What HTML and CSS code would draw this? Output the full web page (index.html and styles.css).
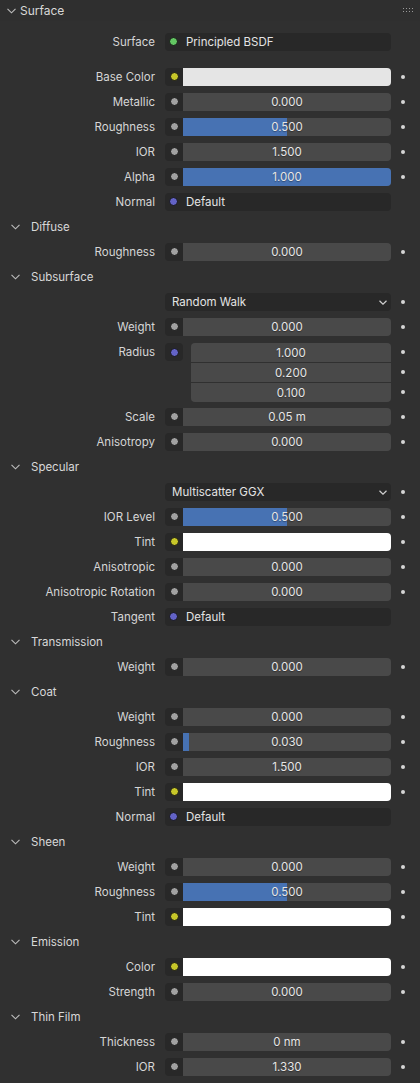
FILE: index.html
```html
<!DOCTYPE html>
<html>
<head>
<meta charset="utf-8">
<link rel="stylesheet" href="styles.css">
</head>
<body>
<div class="panel">
  <div class="top-head">
    <svg class="chev" width="9" height="6" viewBox="0 0 9 6"><polyline points="0.5,0.8 4.5,4.8 8.5,0.8" fill="none" stroke="#bdbdbd" stroke-width="1.1"/></svg>
    <span class="top-title">Surface</span>
    <span class="grip"><i></i><i></i><i></i><i></i><i></i><i></i><i></i><i></i></span>
  </div>

  <div class="row surf-row">
    <span class="label">Surface</span>
    <div class="field link"><i class="dot green"></i><span class="ltext">Principled BSDF</span></div>
    <span></span>
  </div>

  <div class="row"><span class="label">Base Color</span><div class="field"><span class="sock"><i class="dot yellow"></i></span><div class="color light"></div></div><span class="kf"></span></div>
  <div class="row"><span class="label">Metallic</span><div class="field"><span class="sock"><i class="dot grey"></i></span><div class="num"><span class="val">0.000</span></div></div><span class="kf"></span></div>
  <div class="row"><span class="label">Roughness</span><div class="field"><span class="sock"><i class="dot grey"></i></span><div class="num"><span class="fill" style="width:50%"></span><span class="val">0.500</span></div></div><span class="kf"></span></div>
  <div class="row"><span class="label">IOR</span><div class="field"><span class="sock"><i class="dot grey"></i></span><div class="num"><span class="val">1.500</span></div></div><span class="kf"></span></div>
  <div class="row"><span class="label">Alpha</span><div class="field"><span class="sock"><i class="dot grey"></i></span><div class="num"><span class="fill" style="width:100%"></span><span class="val">1.000</span></div></div><span class="kf"></span></div>
  <div class="row"><span class="label">Normal</span><div class="field link"><i class="dot blue"></i><span class="ltext">Default</span></div><span></span></div>

  <div class="sub-head"><svg class="chev" width="9" height="6" viewBox="0 0 9 6"><polyline points="0.5,0.8 4.5,4.8 8.5,0.8" fill="none" stroke="#bdbdbd" stroke-width="1.1"/></svg><span>Diffuse</span></div>
  <div class="row"><span class="label">Roughness</span><div class="field"><span class="sock"><i class="dot grey"></i></span><div class="num"><span class="val">0.000</span></div></div><span class="kf"></span></div>

  <div class="sub-head"><svg class="chev" width="9" height="6" viewBox="0 0 9 6"><polyline points="0.5,0.8 4.5,4.8 8.5,0.8" fill="none" stroke="#bdbdbd" stroke-width="1.1"/></svg><span>Subsurface</span></div>
  <div class="row"><span class="label"></span><div class="field menu"><span class="mtext">Random Walk</span><svg class="mchev" width="8" height="5" viewBox="0 0 8 5"><polyline points="0.5,0.8 4,4.2 7.5,0.8" fill="none" stroke="#d0d0d0" stroke-width="1.2"/></svg></div><span class="kf"></span></div>
  <div class="row"><span class="label">Weight</span><div class="field"><span class="sock"><i class="dot grey"></i></span><div class="num"><span class="val">0.000</span></div></div><span class="kf"></span></div>
  <div class="row vec-row">
    <span class="label vlabel">Radius</span>
    <div class="vec">
      <span class="sock vsock"><i class="dot blue"></i></span>
      <div class="vfields">
        <div class="vnum first"><span class="val">1.000</span></div>
        <div class="vnum"><span class="val">0.200</span></div>
        <div class="vnum last"><span class="val">0.100</span></div>
      </div>
    </div>
    <div class="vkfs"><span class="kf"></span><span class="kf"></span><span class="kf"></span></div>
  </div>
  <div class="row"><span class="label">Scale</span><div class="field"><span class="sock"><i class="dot grey"></i></span><div class="num"><span class="val">0.05 m</span></div></div><span class="kf"></span></div>
  <div class="row"><span class="label">Anisotropy</span><div class="field"><span class="sock"><i class="dot grey"></i></span><div class="num"><span class="val">0.000</span></div></div><span class="kf"></span></div>

  <div class="sub-head"><svg class="chev" width="9" height="6" viewBox="0 0 9 6"><polyline points="0.5,0.8 4.5,4.8 8.5,0.8" fill="none" stroke="#bdbdbd" stroke-width="1.1"/></svg><span>Specular</span></div>
  <div class="row"><span class="label"></span><div class="field menu"><span class="mtext">Multiscatter GGX</span><svg class="mchev" width="8" height="5" viewBox="0 0 8 5"><polyline points="0.5,0.8 4,4.2 7.5,0.8" fill="none" stroke="#d0d0d0" stroke-width="1.2"/></svg></div><span class="kf"></span></div>
  <div class="row"><span class="label">IOR Level</span><div class="field"><span class="sock"><i class="dot grey"></i></span><div class="num"><span class="fill" style="width:50%"></span><span class="val">0.500</span></div></div><span class="kf"></span></div>
  <div class="row"><span class="label">Tint</span><div class="field"><span class="sock"><i class="dot yellow"></i></span><div class="color white"></div></div><span class="kf"></span></div>
  <div class="row"><span class="label">Anisotropic</span><div class="field"><span class="sock"><i class="dot grey"></i></span><div class="num"><span class="val">0.000</span></div></div><span class="kf"></span></div>
  <div class="row"><span class="label">Anisotropic Rotation</span><div class="field"><span class="sock"><i class="dot grey"></i></span><div class="num"><span class="val">0.000</span></div></div><span class="kf"></span></div>
  <div class="row"><span class="label">Tangent</span><div class="field link"><i class="dot blue"></i><span class="ltext">Default</span></div><span></span></div>

  <div class="sub-head"><svg class="chev" width="9" height="6" viewBox="0 0 9 6"><polyline points="0.5,0.8 4.5,4.8 8.5,0.8" fill="none" stroke="#bdbdbd" stroke-width="1.1"/></svg><span>Transmission</span></div>
  <div class="row"><span class="label">Weight</span><div class="field"><span class="sock"><i class="dot grey"></i></span><div class="num"><span class="val">0.000</span></div></div><span class="kf"></span></div>

  <div class="sub-head"><svg class="chev" width="9" height="6" viewBox="0 0 9 6"><polyline points="0.5,0.8 4.5,4.8 8.5,0.8" fill="none" stroke="#bdbdbd" stroke-width="1.1"/></svg><span>Coat</span></div>
  <div class="row"><span class="label">Weight</span><div class="field"><span class="sock"><i class="dot grey"></i></span><div class="num"><span class="val">0.000</span></div></div><span class="kf"></span></div>
  <div class="row"><span class="label">Roughness</span><div class="field"><span class="sock"><i class="dot grey"></i></span><div class="num"><span class="fill" style="width:3%"></span><span class="val">0.030</span></div></div><span class="kf"></span></div>
  <div class="row"><span class="label">IOR</span><div class="field"><span class="sock"><i class="dot grey"></i></span><div class="num"><span class="val">1.500</span></div></div><span class="kf"></span></div>
  <div class="row"><span class="label">Tint</span><div class="field"><span class="sock"><i class="dot yellow"></i></span><div class="color white"></div></div><span class="kf"></span></div>
  <div class="row"><span class="label">Normal</span><div class="field link"><i class="dot blue"></i><span class="ltext">Default</span></div><span></span></div>

  <div class="sub-head"><svg class="chev" width="9" height="6" viewBox="0 0 9 6"><polyline points="0.5,0.8 4.5,4.8 8.5,0.8" fill="none" stroke="#bdbdbd" stroke-width="1.1"/></svg><span>Sheen</span></div>
  <div class="row"><span class="label">Weight</span><div class="field"><span class="sock"><i class="dot grey"></i></span><div class="num"><span class="val">0.000</span></div></div><span class="kf"></span></div>
  <div class="row"><span class="label">Roughness</span><div class="field"><span class="sock"><i class="dot grey"></i></span><div class="num"><span class="fill" style="width:50%"></span><span class="val">0.500</span></div></div><span class="kf"></span></div>
  <div class="row"><span class="label">Tint</span><div class="field"><span class="sock"><i class="dot yellow"></i></span><div class="color white"></div></div><span class="kf"></span></div>

  <div class="sub-head"><svg class="chev" width="9" height="6" viewBox="0 0 9 6"><polyline points="0.5,0.8 4.5,4.8 8.5,0.8" fill="none" stroke="#bdbdbd" stroke-width="1.1"/></svg><span>Emission</span></div>
  <div class="row"><span class="label">Color</span><div class="field"><span class="sock"><i class="dot yellow"></i></span><div class="color white"></div></div><span class="kf"></span></div>
  <div class="row"><span class="label">Strength</span><div class="field"><span class="sock"><i class="dot grey"></i></span><div class="num"><span class="val">0.000</span></div></div><span class="kf"></span></div>

  <div class="sub-head"><svg class="chev" width="9" height="6" viewBox="0 0 9 6"><polyline points="0.5,0.8 4.5,4.8 8.5,0.8" fill="none" stroke="#bdbdbd" stroke-width="1.1"/></svg><span>Thin Film</span></div>
  <div class="row"><span class="label">Thickness</span><div class="field"><span class="sock"><i class="dot grey"></i></span><div class="num"><span class="val">0 nm</span></div></div><span class="kf"></span></div>
  <div class="row"><span class="label">IOR</span><div class="field"><span class="sock"><i class="dot grey"></i></span><div class="num"><span class="val">1.330</span></div></div><span class="kf"></span></div>
</div>
</body>
</html>
```
FILE: styles.css
```css
* { box-sizing: border-box; }
html, body {
  margin: 0;
  padding: 0;
  background: #303030;
}
body {
  width: 420px;
  height: 1083px;
  overflow: hidden;
  font-family: Inter, "Noto Sans", "DejaVu Sans", sans-serif;
  font-size: 11.5px;
  color: #d8d8d8;
}
.panel {
  display: flex;
  flex-direction: column;
}
.top-head {
  height: 21px;
  display: flex;
  align-items: center;
  padding-left: 7px;
  position: relative;
  background: #2f2f2f;
}
.top-head .chev { margin-right: 4px; margin-top: 1px; }
.top-title {
  font-size: 12px;
  color: #d8d8d8;
}
.grip {
  position: absolute;
  right: 7px;
  top: 8px;
  width: 10px;
  height: 5px;
  display: grid;
  grid-template-columns: repeat(4, 1px);
  grid-template-rows: repeat(2, 1px);
  column-gap: 2px;
  row-gap: 2px;
}
.grip i {
  width: 1px;
  height: 1px;
  background: #9a9a9a;
}
.row {
  height: 25px;
  display: grid;
  grid-template-columns: 155px 226px 1fr;
  column-gap: 10px;
  align-items: center;
}
.surf-row {
  margin-top: 8px;
  margin-bottom: 10px;
}
.label {
  text-align: right;
  color: #d6d6d6;
  white-space: nowrap;
}
.field {
  height: 18px;
  display: flex;
  border-radius: 4px;
  overflow: hidden;
}
.sock {
  width: 18px;
  height: 18px;
  background: #282828;
  display: flex;
  align-items: center;
  justify-content: center;
  flex: none;
}
.dot {
  display: block;
  width: 9px;
  height: 9px;
  border-radius: 50%;
  border: 1px solid #151515;
  flex: none;
}
.dot.grey { background: #a1a1a1; }
.dot.yellow { background: #c7c729; }
.dot.blue { background: #6363c7; }
.dot.green { background: #63c763; }
.num {
  flex: 1;
  position: relative;
  background: #494949;
  display: flex;
  align-items: center;
  justify-content: center;
}
.fill {
  position: absolute;
  left: 0;
  top: 0;
  bottom: 0;
  background: #4772b3;
}
.val {
  position: relative;
  color: #e6e6e6;
  text-shadow: 0 1px 1px rgba(0,0,0,0.35);
}
.color { flex: 1; }
.color.light { background: #e5e5e5; }
.color.white { background: #ffffff; }
.link {
  background: #282828;
  align-items: center;
  padding-left: 4px;
}
.link .ltext {
  margin-left: 8px;
  color: #e4e4e4;
}
.menu {
  background: #282828;
  align-items: center;
  padding-left: 7px;
  padding-right: 2px;
  justify-content: space-between;
}
.mtext { color: #e4e4e4; }
.mchev { margin-right: 2px; margin-top: 1px; }
.kf {
  display: block;
  width: 4px;
  height: 4px;
  border-radius: 50%;
  background: #d6d6d6;
}
.sub-head {
  height: 25px;
  display: flex;
  align-items: center;
  padding-left: 11px;
  color: #d8d8d8;
  font-size: 11.5px;
}
.sub-head .chev { margin-right: 11px; margin-top: 1px; }
.vec-row {
  height: 65px;
  align-items: start;
  padding-top: 4px;
}
.vlabel {
  line-height: 18px;
}
.vec {
  display: flex;
  gap: 8px;
}
.vsock {
  border-radius: 4px;
}
.vfields {
  flex: 1;
  display: flex;
  flex-direction: column;
  gap: 1px;
}
.vnum {
  height: 19px;
  background: #494949;
  display: flex;
  align-items: center;
  justify-content: center;
}
.vnum.first { border-radius: 4px 4px 0 0; }
.vnum.last { border-radius: 0 0 4px 4px; }
.vkfs {
  display: flex;
  flex-direction: column;
}
.vkfs .kf {
  margin-top: 7px;
  margin-bottom: 8px;
}
.vkfs .kf + .kf { margin-top: 8px; }
```
